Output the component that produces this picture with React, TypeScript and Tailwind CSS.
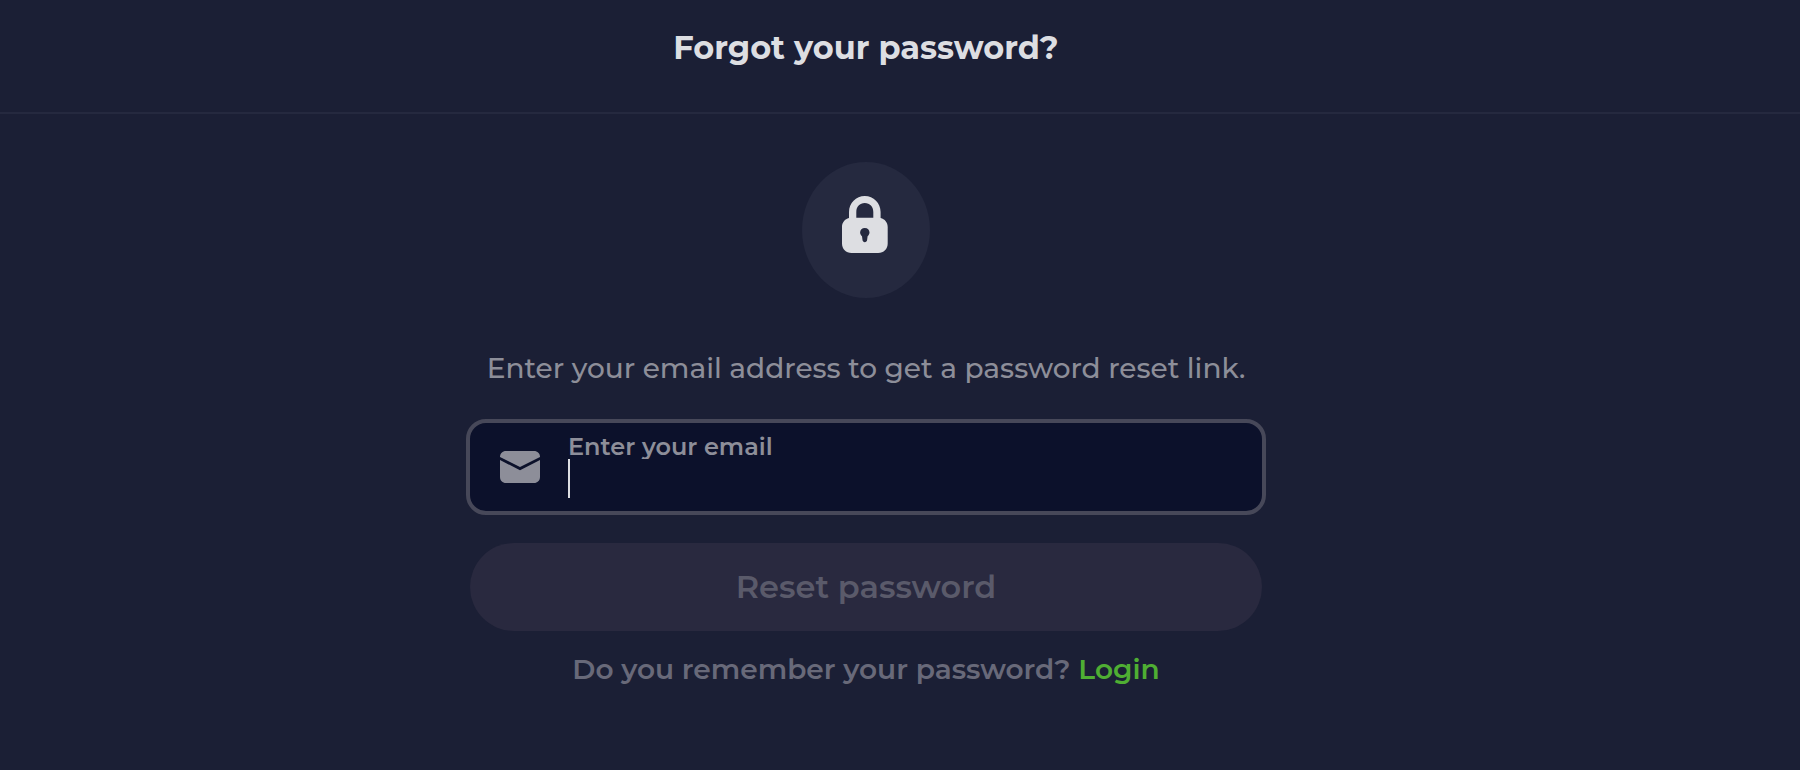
import { useState } from 'react'

function LockIcon() {
  return (
    <svg width="48" height="57" viewBox="0 0 48 57" fill="none" aria-hidden="true">
      <path
        fillRule="evenodd"
        clipRule="evenodd"
        d="M7 22V16C7 7 14 0 22.8 0S38.6 7 38.6 16V22C42.800 23 45.700 26.500 45.700 31V47.500C45.700 53 41.700 57 36.200 57H9.500C4 57 0 53 0 47.500V31C0 26.500 2.900 23 7 22ZM14.300 21.700H31.300V16C31.300 10.500 27.800 7 22.800 7S14.300 10.500 14.300 16V21.700ZM22.800 32C20 32 18.100 34 18.100 36.500C18.100 38 18.900 39.200 20 40.200L20.500 44C20.700 45.400 21.600 46.200 22.800 46.200S24.900 45.400 25.100 44L25.600 40.200C26.700 39.200 27.500 38 27.500 36.500C27.500 34 25.600 32 22.800 32Z"
        fill="#dddee2"
      />
    </svg>
  )
}

function MailIcon() {
  return (
    <svg width="40" height="32" viewBox="0 0 40 32" fill="#8d8e99" className="shrink-0" aria-hidden="true">
      <path d="M0 6C0 2.500 2.500 0 6 0H34C37.500 0 40 2.500 40 6L20 16Z" />
      <path d="M0 9L20 19.300L40 9V26C40 29.500 37.500 32 34 32H6C2.500 32 0 29.500 0 26Z" />
    </svg>
  )
}

export default function App() {
  const [email, setEmail] = useState('')

  return (
    <div className="min-h-screen bg-[#1b1f35] font-['Montserrat','Inter',sans-serif]">
      <header className="border-b-2 border-[#25293f] pt-7 pr-17 pb-11">
        <h1 className="text-center text-[32px] leading-10 font-bold text-[#dddee2]">Forgot your password?</h1>
      </header>

      <main className="flex flex-col items-center pt-12 pr-17 pb-12">
        <div className="flex h-34 w-32 justify-center rounded-[50%] bg-[#25293f] pt-[34px]">
          <LockIcon />
        </div>

        <p className="mt-[50px] text-center text-[28px] leading-10 font-medium text-[#8d8e99]">
          Enter your email address to get a password reset link.
        </p>

        <form className="mt-[31px] flex w-full max-w-[800px] flex-col" onSubmit={(e) => e.preventDefault()}>
          <div className="flex h-24 items-center gap-7 rounded-[20px] border-4 border-[#474859] bg-[#0c112b] pl-[30px]">
            <MailIcon />
            <div className="flex h-full flex-1 flex-col pt-3 pr-7">
              <label htmlFor="email" className="text-2xl/6 font-semibold text-[#8d8e99]">
                Enter your email
              </label>
              <div className="flex h-[39px]">
                {email === '' && <span className="w-0.5 bg-[#dddee2]" />}
                <input
                  id="email"
                  type="email"
                  value={email}
                  onChange={(e) => setEmail(e.target.value)}
                  className="h-full min-w-0 flex-1 bg-[#0c112b] text-[28px] font-medium text-[#dddee2] outline-none"
                />
              </div>
            </div>
          </div>

          <button
            type="submit"
            disabled={email === ''}
            className="mx-1 mt-7 h-22 rounded-full bg-[#29293f] text-[32px] leading-10 font-semibold text-[#5a5a6a]"
          >
            Reset password
          </button>
        </form>

        <p className="mt-[18px] text-center text-[28px] leading-10 font-semibold text-[#686979]">
          Do you remember your password?{' '}
          <a href="#login" className="text-[#4fae33]">
            Login
          </a>
        </p>
      </main>
    </div>
  )
}
